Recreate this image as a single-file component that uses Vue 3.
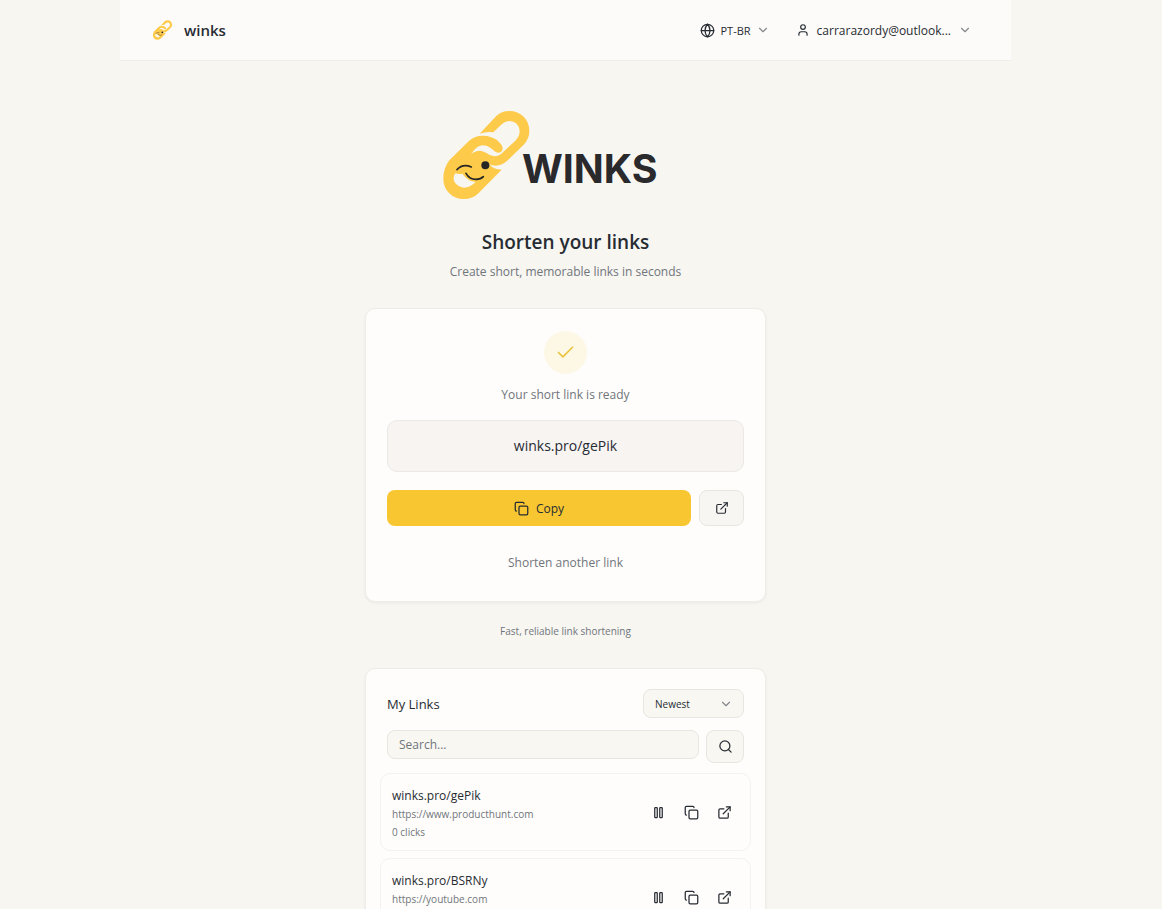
<script setup>
import { ref, computed, h } from 'vue'

const language = ref('PT-BR')
const sort = ref('newest')
const search = ref('')
const current = 'winks.pro/gePik'

const links = ref([
  { short: 'winks.pro/gePik', url: 'https://www.producthunt.com', clicks: 0 },
  { short: 'winks.pro/BSRNy', url: 'https://youtube.com', clicks: 0 }
])

const filtered = computed(() => {
  const q = search.value.toLowerCase()
  return links.value.filter(l => (l.short + l.url).toLowerCase().includes(q))
})

const icons = {
  globe: '<circle cx="12" cy="12" r="10"/><path d="M12 2a14.5 14.5 0 0 0 0 20 14.5 14.5 0 0 0 0-20"/><path d="M2 12h20"/>',
  user: '<circle cx="12" cy="7" r="4"/><path d="M19 21v-2a4 4 0 0 0-4-4H9a4 4 0 0 0-4 4v2"/>',
  chevron: '<path d="m6 9 6 6 6-6"/>',
  check: '<path d="M20 6 9 17l-5-5"/>',
  copy: '<rect x="8" y="8" width="14" height="14" rx="2"/><path d="M4 16c-1.1 0-2-.9-2-2V4c0-1.1.9-2 2-2h10c1.1 0 2 .9 2 2"/>',
  open: '<path d="M15 3h6v6"/><path d="M10 14 21 3"/><path d="M18 13v6a2 2 0 0 1-2 2H5a2 2 0 0 1-2-2V8a2 2 0 0 1 2-2h6"/>',
  search: '<circle cx="11" cy="11" r="8"/><path d="m21 21-4.3-4.3"/>',
  pause: '<rect x="14" y="4" width="4" height="16" rx="1"/><rect x="6" y="4" width="4" height="16" rx="1"/>'
}

const Icon = ({ name, size = 16 }) => h('svg', {
  width: size,
  height: size,
  viewBox: '0 0 24 24',
  fill: 'none',
  stroke: 'currentColor',
  'stroke-width': 2,
  'stroke-linecap': 'round',
  'stroke-linejoin': 'round',
  'aria-hidden': 'true',
  innerHTML: icons[name]
})
Icon.props = ['name', 'size']

// two chain links, the lower one with the winking face
const markup = `
  <path fill="#fdca4a" d="M149 101 L198 49 Q214 33 238 33 Q264 33 281 50 Q298 67 298 93 Q298 117 281 134 L234 180 Q218 197 196 197 Q182 197 172 188 L166 157 Q180 168 193 169 Q205 169 213 162 L256 122 Q269 109 269 93 Q269 80 260 71 Q251 63 238 63 Q226 63 217 71 L190 97 Q170 94 149 101 Z"/>
  <path fill="#fdca4a" fill-rule="evenodd" d="M58 181 L119 121 Q134 107 158 107 Q184 107 202 121 L213 133 Q221 143 216 153 Q208 162 196 155 L181 143 Q170 136 157 136 Q139 137 123 163 Q134 152 151 152 Q162 153 172 162 L174 188 Q186 204 200 207 L215 209 L146 279 Q128 297 102 297 Q74 297 57 279 Q40 261 40 236 Q40 205 58 181 Z M76 220 Q67 234 74 247 Q84 262 102 263 Q116 263 126 255 L137 246 Q112 243 97 221 Q86 223 76 220 Z"/>
  <path fill="none" stroke="#252525" stroke-width="5" stroke-linecap="round" d="M81 209 Q98 190 124 201 M108 220 Q118 238 138 238 Q153 238 160 230"/>
  <circle cx="166" cy="196" r="12" fill="#252525"/>`
</script>

<template>
  <div class="page">
    <header class="topbar">
      <a href="#" class="brand">
        <svg class="brand-mark" viewBox="38 31 262 268" aria-hidden="true" v-html="markup"></svg>
        <span>winks</span>
      </a>
      <nav class="menu">
        <button type="button" class="menu-btn lang">
          <Icon name="globe" size="15" />
          {{ language }}
          <Icon name="chevron" size="14" class="chevron" />
        </button>
        <button type="button" class="menu-btn account">
          <Icon name="user" size="14" />
          <span class="email">carrarazordy@outlook...</span>
          <Icon name="chevron" size="14" class="chevron" />
        </button>
      </nav>
    </header>

    <main>
      <section class="hero">
        <svg class="logo" viewBox="36 30 744 270" role="img" aria-label="Winks">
          <g v-html="markup"></g>
          <text class="wordmark" x="276" y="248">WINKS</text>
        </svg>
        <h1>Shorten your links</h1>
        <p>Create short, memorable links in seconds</p>
      </section>

      <section class="card result">
        <div class="badge"><Icon name="check" size="21" /></div>
        <p class="ready">Your short link is ready</p>
        <output class="short">{{ current }}</output>
        <div class="actions">
          <button type="button" class="copy"><Icon name="copy" size="15" />Copy</button>
          <button type="button" class="open" aria-label="Open link"><Icon name="open" size="14" /></button>
        </div>
        <button type="button" class="again">Shorten another link</button>
      </section>

      <p class="tagline">Fast, reliable link shortening</p>

      <section class="card links">
        <div class="links-head">
          <h2>My Links</h2>
          <div class="sort">
            <select v-model="sort" aria-label="Sort links">
              <option value="newest">Newest</option>
              <option value="oldest">Oldest</option>
            </select>
            <Icon name="chevron" size="14" class="chevron" />
          </div>
        </div>
        <form class="search" @submit.prevent>
          <input v-model="search" type="text" placeholder="Search..." aria-label="Search links" />
          <button type="submit" aria-label="Search"><Icon name="search" size="15" /></button>
        </form>
        <ul>
          <li v-for="link in filtered" :key="link.short">
            <div class="info">
              <a href="#" class="name">{{ link.short }}</a>
              <span>{{ link.url }}</span>
              <span>{{ link.clicks }} clicks</span>
            </div>
            <div class="tools">
              <button type="button" aria-label="Pause"><Icon name="pause" size="15" /></button>
              <button type="button" aria-label="Copy"><Icon name="copy" size="15" /></button>
              <button type="button" aria-label="Open"><Icon name="open" size="15" /></button>
            </div>
          </li>
        </ul>
      </section>
    </main>
  </div>
</template>

<style>
html {
  background: #f7f6f1;
  scrollbar-width: none;
}

body { margin: 0; }
</style>

<style scoped>
* { box-sizing: border-box; margin: 0; padding: 0; }

.page {
  padding-right: 31px;
  font-family: "Segoe UI", "Open Sans", sans-serif;
  font-size: 12px;
  color: #272c33;
}

button, input, select {
  font: inherit;
  color: inherit;
}

button {
  display: flex;
  align-items: center;
  justify-content: center;
  background: none;
  border: none;
  cursor: pointer;
}

a {
  color: inherit;
  text-decoration: none;
}

svg { flex-shrink: 0; }

.chevron { color: #85888c; }

.topbar {
  display: flex;
  align-items: center;
  justify-content: space-between;
  max-width: 891px;
  height: 61px;
  margin: 0 auto;
  padding: 0 39px 0 32px;
  background: #fcfbf9;
  border-bottom: 1px solid #efeeea;
}

.brand {
  display: flex;
  align-items: center;
  gap: 11px;
  font-size: 15px;
  font-weight: 600;
}

.brand-mark {
  width: 21px;
  height: 20px;
}

.menu {
  display: flex;
  gap: 26px;
}

.lang {
  gap: 5px;
  font-size: 11px;
}

.account { gap: 7px; }

main {
  display: flex;
  flex-direction: column;
  max-width: 401px;
  margin: 0 auto;
}

.hero {
  display: flex;
  flex-direction: column;
  align-items: center;
  padding: 49px 0 26px;
}

.logo {
  width: 248px;
  height: 90px;
}

.wordmark {
  font-family: Inter, sans-serif;
  font-size: 118px;
  font-weight: 700;
  fill: #2a292c;
}

h1 {
  margin-top: 27px;
  font-size: 19px;
  font-weight: 600;
  line-height: 30px;
}

.hero p {
  margin-top: 5px;
  line-height: 20px;
  color: #70757c;
}

.card {
  background: #fefdfb;
  border: 1px solid #eeede9;
  border-radius: 10px;
  box-shadow: 0 1px 3px rgba(0, 0, 0, 0.06);
}

.result {
  display: flex;
  flex-direction: column;
  padding: 22px 21px 21px;
}

.badge {
  display: flex;
  align-items: center;
  justify-content: center;
  align-self: center;
  width: 43px;
  height: 43px;
  border-radius: 50%;
  background: #fdf8e6;
  color: #e9c443;
}

.ready {
  margin: 11px 0 15px;
  line-height: 20px;
  text-align: center;
  color: #70757c;
}

.short {
  padding: 15px;
  background: #f7f4f2;
  border: 1px solid #ebe9e6;
  border-radius: 10px;
  font-size: 14px;
  line-height: 20px;
  text-align: center;
}

.actions {
  display: flex;
  gap: 8px;
  margin: 18px 0;
}

.copy, .open {
  height: 36px;
  border-radius: 8px;
}

.copy {
  flex: 1;
  gap: 7px;
  background: #f8c630;
}

.open {
  width: 45px;
  background: #f8f6f2;
  border: 1px solid #e8e6e1;
}

.again {
  height: 36px;
  color: #70757c;
}

.tagline {
  margin: 20px 0 28px;
  font-size: 10px;
  line-height: 18px;
  text-align: center;
  color: #70757c;
}

.links { padding: 20px 14px; }

.links-head, .search {
  display: flex;
  justify-content: space-between;
  padding: 0 7px;
}

.links-head { align-items: center; }

h2 {
  font-size: 13px;
  font-weight: 400;
}

.sort {
  display: grid;
  align-items: center;
  width: 101px;
}

.sort select, .search input, .search button {
  background: #f8f7f2;
  border: 1px solid #e8e6e0;
  border-radius: 8px;
}

.sort select {
  grid-area: 1 / 1;
  height: 29px;
  padding: 0 11px;
  font-size: 10px;
  appearance: none;
}

.sort .chevron {
  grid-area: 1 / 1;
  justify-self: end;
  margin-right: 11px;
  pointer-events: none;
}

.search {
  gap: 7px;
  margin: 12px 0 10px;
}

.search input {
  flex: 1;
  min-width: 0;
  height: 29px;
  padding: 0 11px;
}

.search input::placeholder { color: #70757c; }

.search button {
  width: 38px;
  height: 33px;
}

ul {
  display: grid;
  gap: 7px;
  list-style: none;
}

li {
  display: flex;
  align-items: center;
  justify-content: space-between;
  padding: 0 9px 0 11px;
  border: 1px solid #f3f2ee;
  border-radius: 10px;
}

.info {
  display: flex;
  flex-direction: column;
  padding: 13px 0 9px;
  font-size: 10px;
  line-height: 18px;
  color: #70757c;
}

.name {
  font-size: 12px;
  color: #272c33;
}

.tools { display: flex; }

.tools button {
  width: 33px;
  height: 28px;
}
</style>
